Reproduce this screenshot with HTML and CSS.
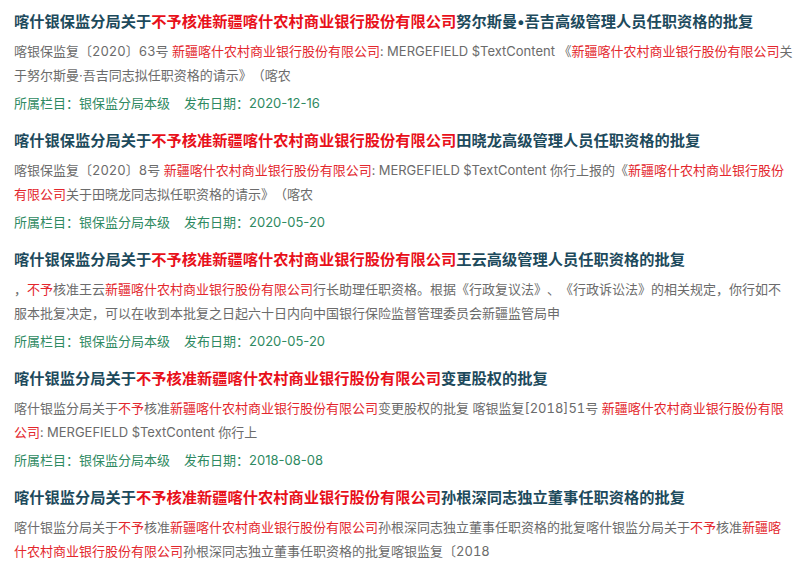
FILE: index.html
```html
<!DOCTYPE html>
<html lang="zh-CN">
<head>
<meta charset="utf-8">
<title>搜索结果</title>
<link rel="stylesheet" href="styles.css">
</head>
<body>
<ul class="results">
  <li class="result">
    <h3 class="result-title">喀什银保监分局关于<em>不予核准新疆喀什农村商业银行股份有限公司</em>努尔斯曼•吾吉高级管理人员任职资格的批复</h3>
    <p class="result-summary">喀银保监复〔2020〕63号 <em>新疆喀什农村商业银行股份有限公司</em>: MERGEFIELD $TextContent 《<em>新疆喀什农村商业银行股份有限公司</em>关于努尔斯曼·吾吉同志拟任职资格的请示》（喀农</p>
    <p class="result-meta"><span>所属栏目：银保监分局本级</span><span>发布日期：2020-12-16</span></p>
  </li>
  <li class="result">
    <h3 class="result-title">喀什银保监分局关于<em>不予核准新疆喀什农村商业银行股份有限公司</em>田晓龙高级管理人员任职资格的批复</h3>
    <p class="result-summary">喀银保监复〔2020〕8号 <em>新疆喀什农村商业银行股份有限公司</em>: MERGEFIELD $TextContent 你行上报的《<em>新疆喀什农村商业银行股份有限公司</em>关于田晓龙同志拟任职资格的请示》（喀农</p>
    <p class="result-meta"><span>所属栏目：银保监分局本级</span><span>发布日期：2020-05-20</span></p>
  </li>
  <li class="result">
    <h3 class="result-title">喀什银保监分局关于<em>不予核准新疆喀什农村商业银行股份有限公司</em>王云高级管理人员任职资格的批复</h3>
    <p class="result-summary">，<em>不予</em>核准王云<em>新疆喀什农村商业银行股份有限公司</em>行长助理任职资格。根据《行政复议法》、《行政诉讼法》的相关规定，你行如不服本批复决定，可以在收到本批复之日起六十日内向中国银行保险监督管理委员会新疆监管局申</p>
    <p class="result-meta"><span>所属栏目：银保监分局本级</span><span>发布日期：2020-05-20</span></p>
  </li>
  <li class="result">
    <h3 class="result-title">喀什银监分局关于<em>不予核准新疆喀什农村商业银行股份有限公司</em>变更股权的批复</h3>
    <p class="result-summary">喀什银监分局关于<em>不予</em>核准<em>新疆喀什农村商业银行股份有限公司</em>变更股权的批复 喀银监复[2018]51号 <em>新疆喀什农村商业银行股份有限公司</em>: MERGEFIELD $TextContent 你行上</p>
    <p class="result-meta"><span>所属栏目：银保监分局本级</span><span>发布日期：2018-08-08</span></p>
  </li>
  <li class="result">
    <h3 class="result-title">喀什银监分局关于<em>不予核准新疆喀什农村商业银行股份有限公司</em>孙根深同志独立董事任职资格的批复</h3>
    <p class="result-summary">喀什银监分局关于<em>不予</em>核准<em>新疆喀什农村商业银行股份有限公司</em>孙根深同志独立董事任职资格的批复喀什银监分局关于<em>不予</em>核准<em>新疆喀什农村商业银行股份有限公司</em>孙根深同志独立董事任职资格的批复喀银监复〔2018</p>
    <p class="result-meta"><span>所属栏目：银保监分局本级</span><span>发布日期：2018-08-08</span></p>
  </li>
</ul>
</body>
</html>
```
FILE: styles.css
```css
html, body {
  margin: 0;
  padding: 0;
  background: #ffffff;
}

body {
  font-family: Inter, "Noto Sans CJK SC", sans-serif;
  text-spacing-trim: space-all;
}

.results {
  list-style: none;
  margin: 0;
  padding: 10px 7px 0 14px;
  width: 779px;
}

.result {
  margin: 0 0 14px;
}

.result em {
  font-style: normal;
}

.result-title {
  margin: 0;
  font-size: 15.25px;
  line-height: 24px;
  font-weight: 700;
  color: #1d4a5c;
  white-space: nowrap;
}

.result-title em {
  color: #e8101a;
}

.result-summary {
  margin: 5px 0 0;
  font-size: 13px;
  line-height: 24px;
  color: #6b6b6b;
  font-feature-settings: "tnum";
}

.result-summary em {
  color: #e3262c;
}

.result-meta {
  margin: 4px 0 0;
  font-size: 13px;
  line-height: 24px;
  color: #2f8a62;
  display: flex;
  gap: 14px;
}
```
